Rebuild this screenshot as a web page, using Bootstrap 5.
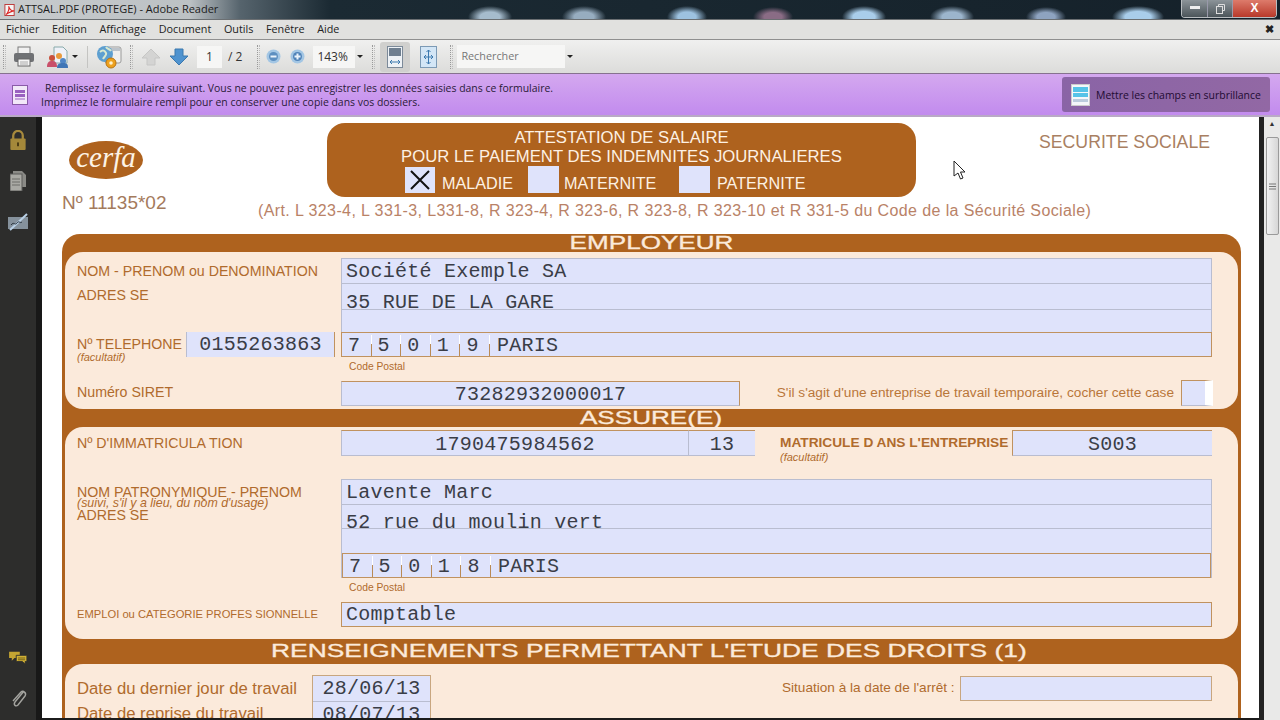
<!DOCTYPE html>
<html lang="fr">
<head>
    <meta charset="UTF-8">
    <title>ATTSAL.PDF (PROTEGE) - Adobe Reader</title>
    <link rel="stylesheet" href="https://cdn.jsdelivr.net/npm/bootstrap@5.3.0/dist/css/bootstrap.min.css">
    <style>
        html, body { height: 720px; overflow: hidden; }
        body { font-family: "Open Sans", "Liberation Sans", sans-serif; background: #1c1c1c; color: #222; position: relative; }
        .app-shell { width: 1280px; height: 720px; }

        /* barre de titre */
        .title-bar {
            height: 20px; font-size: 11px; color: #1c1c1c; padding-left: 4px;
            background:
                radial-gradient(ellipse 22px 11px at 490px 17px, #a6bccd 45%, transparent),
                radial-gradient(ellipse 22px 11px at 584px 17px, #97adc0 45%, transparent),
                radial-gradient(ellipse 20px 11px at 687px 17px, #9dc2e0 45%, transparent),
                radial-gradient(ellipse 20px 10px at 773px 17px, #8a6c85 45%, transparent),
                radial-gradient(ellipse 22px 11px at 864px 17px, #a9cdea 50%, transparent),
                radial-gradient(ellipse 22px 11px at 952px 17px, #9cb5cc 45%, transparent),
                radial-gradient(ellipse 20px 10px at 1046px 17px, #8ea3c0 45%, transparent),
                radial-gradient(ellipse 26px 11px at 1138px 17px, #a9cdea 50%, transparent),
                linear-gradient(90deg, #c8cbcd 0, #bcc1c4 190px, #56646d 240px, #1b2a33 330px, #15212a 100%);
            border-bottom: 1px solid #6b6f72;
        }
        .title-icon { margin-right: 2px; }
        .win-btns { margin-left: auto; margin-right: 3px; height: 18px; border: 1px solid #b9bdc0; border-top: 0; border-radius: 0 0 4px 4px; width: 96px; overflow: hidden; margin-top: -2px; }
        .win-btns span { display: flex; align-items: center; justify-content: center; height: 100%; }
        .win-min { width: 26px; background: linear-gradient(#8c9499, #4c555a); border-right: 1px solid #99a; }
        .win-max { width: 25px; background: linear-gradient(#8c9499, #4c555a); border-right: 1px solid #99a; }
        .win-close { flex: 1; background: linear-gradient(#dd7b6b, #b8392a); color: #fff; font: 700 12px "Liberation Sans", sans-serif; }

        .menu-bar { height: 20px; background: #e1e1df; border-bottom: 1px solid #8f8f8f; font-size: 10.8px; padding: 0 6px; gap: 12.6px; color: #222; }
        .menu-close { font: 700 11px "Liberation Sans", sans-serif; margin-left: auto; }
        .tool-bar { height: 34px; background: linear-gradient(#f0f0ef, #dcdcda); border-bottom: 1px solid #86728f; padding-left: 3px; font-size: 12px; color: #333; }
        .tb-grip { width: 3px; height: 24px; flex: none; border-left: 1px dotted #999; border-right: 1px dotted #bbb; }
        .tb-line { width: 1px; height: 22px; flex: none; background: #c4c4c2; }
        .tb-input { background: #f6f6f5; height: 22px; display: flex; align-items: center; flex: none; }
        .tb-page { width: 25px; justify-content: center; }
        .tb-zoom { width: 42px; padding-left: 4px; }
        .tb-search { width: 108px; height: 23px; padding-left: 4px; font-size: 10.8px; color: #777; }
        .tb-caret { width: 0; height: 0; flex: none; border-left: 3px solid transparent; border-right: 3px solid transparent; border-top: 3px solid #222; }
        .tb-active { width: 30px; height: 30px; flex: none; background: #d0d0ce; border-radius: 3px; display: flex; align-items: center; justify-content: center; }
        .ml2 { margin-left: 2px; } .ml3 { margin-left: 3px; } .ml4 { margin-left: 4px; } .ml5 { margin-left: 5px; }
        .ml6 { margin-left: 6px; } .ml7 { margin-left: 7px; } .ml8 { margin-left: 8px; } .ml9 { margin-left: 9px; }
        .ml10 { margin-left: 10px; } .ml12 { margin-left: 12px; } .ml13 { margin-left: 13px; } .ml15 { margin-left: 15px; }

        .notice-bar { height: 43px; background: linear-gradient(#d4a8ef, #c28bee); border-bottom: 2px solid #b9a9c6; font-size: 10.45px; line-height: 14px; color: #2a1a38; padding-left: 12px; }
        .notice-text { margin-left: 13px; }
        .notice-btn { margin-left: auto; margin-right: 10px; width: 208px; height: 35px; background: linear-gradient(90deg, #8a64a6, #9268a4); border-radius: 3px; color: #1f0b33; padding-left: 9px; gap: 6px; }

        /* zone document */
        .doc-zone { height: 603px; }
        .side-rail { width: 36px; background: #2d2d2c; padding: 13px 0 12px; border-right: 6px solid #181818; box-sizing: content-box; }
        .rail-icon-a { margin-bottom: 20px; }
        .rail-icon-b { margin-bottom: 21px; }
        .rail-gap { flex: 1; }
        .pdf-page { width: 1217px; background: #fff; padding: 6px 18px 0 20px; overflow: hidden; margin-bottom: 2px; font-family: "Liberation Sans", Arial, sans-serif; }
        .right-edge { width: 5px; background: #222; }
        .scroll-rail { width: 16px; background: #e9e9e8; text-align: center; font-size: 7px; line-height: 14px; color: #333; }
        .scroll-thumb { margin: 6px 1px 0 2px; height: 98px; background: linear-gradient(90deg, #f2f2f2, #d6d6d6); border: 1px solid #9a9a9a; border-radius: 2px; }

        /* entete cerfa */
        .head-left { width: 196px; flex: none; }
        .cerfa-logo { width: 74px; height: 38px; margin: 18px 0 0 7px; background: #ae621e; border-radius: 50%; color: #fdf3e6; font: italic 29px/32px "Liberation Serif", serif; text-align: center; }
        .cerfa-num { font-size: 19px; line-height: 22px; color: #a47a5c; margin-top: 13px; }
        .head-box { margin-left: 69px; width: 589px; height: 74px; background: #ae621e; border-radius: 18px; color: #fdf1e4; text-align: center; font-size: 16.7px; line-height: 19px; padding-top: 5px; }
        .head-checks { font-size: 16.2px; padding-left: 78px; line-height: 34px; text-align: left; height: 27px; }
        .head-check { width: 31px; height: 27px; background: #dfe3fb; color: #111; flex: none; }
        .check-first { width: 30px; height: 26px; margin-top: 1px; }
        .label-maladie { margin-left: 7px; width: 86px; }
        .label-maternite { margin-left: 5px; width: 115px; }
        .label-paternite { margin-left: 7px; }
        .secu-title { margin-left: 123px; margin-top: 8px; font-size: 17.7px; line-height: 22px; color: #a97f62; white-space: nowrap; }
        .art-line { margin-top: 4px; font-size: 16px; line-height: 20px; color: #b98267; white-space: nowrap; letter-spacing: .39px; }

        /* formulaire */
        .form-frame { background: #ae621e; border-radius: 18px 18px 0 0; margin-top: 13px; padding: 0 3px; height: 520px; }
        .band-title { text-align: center; color: #fbeadb; font-size: 18px; white-space: nowrap; -webkit-text-stroke: .3px #fbeadb; height: 18px; line-height: 19px; }
        .band-title span { display: inline-block; transform: scaleX(1.45); }
        .band-tall { height: 25px; line-height: 25px; padding-right: 5px; }
        .band-tall span { transform: scaleX(1.465); }
        .form-panel { background: #fbeadb; border-radius: 18px; color: #b06b2d; font-size: 14.2px; padding: 0 0 0 12px; }
        .panel-emp { height: 157px; padding-top: 6px; }
        .panel-ass { height: 212px; padding-top: 3px; }
        .panel-ren { height: 80px; padding-top: 12px; font-size: 16.7px; }
        .row-label { width: 264px; flex: none; white-space: nowrap; }
        .label-line { height: 24px; line-height: 26px; }
        .label-tel { width: 109px; }
        .tel-text { line-height: 24px; height: 19px; }
        .small-note { font-size: 11px; line-height: 12px; font-style: italic; }
        .note-suivi { font-size: 12.4px; line-height: 9px; }
        .code-postal { font-size: 10.3px; line-height: 12px; color: #b06b2d; margin: 4px 0 0 272px; }

        .pdf-field { background: #dfe3fb; font-family: "Liberation Mono", monospace; font-size: 20px; letter-spacing: .25px; color: #3a3d47; white-space: nowrap; display: flex; align-items: center; line-height: 20px; }
        .field-line { border-top: 1px solid #b9bdd0; }
        .field-block { width: 871px; border: 1px solid #b9bdd0; border-bottom: 0; }
        .field-brown { border: 1px solid #c0925f; }
        .field-up { align-items: flex-start; padding-top: 3px; }
        .field-low { align-items: flex-start; padding-top: 9px; }
        .field-mid { align-items: flex-start; padding-top: 8px; }
        .field-drop { padding-top: 2px; }
        .h23 { height: 23px; } .h24 { height: 24px; } .h25 { height: 25px; } .h26 { height: 26px; }
        .comb-cell { width: 29.6px; height: 100%; flex: none; display: flex; align-items: center; padding-left: 6px; border-right: 1px solid; border-image: linear-gradient(#fff 45%, #b98a55 45%) 1; }
        .comb-town { margin-left: 7px; }
        .field-tel { width: 149px; height: 25px; padding-top: 1px; border-right: 1px solid #c0925f; border-left: 1px solid #b9bdd0; }
        .siret-row { margin-top: 7px; }
        .field-siret { width: 399px; height: 25px; border-top: 1px solid #c0925f; border-right: 1px solid #c0925f; border-left: 1px solid #b9bdd0; border-bottom: 1px solid #b9bdd0; padding-top: 4px; }
        .temp-text { margin-left: auto; margin-right: 7px; font-size: 13.67px; color: #b9763a; white-space: nowrap; }
        .field-temp { width: 32px; height: 26px; margin-right: 25px; border: 1px solid #c0925f; border-bottom-color: #b9bdd0; border-right-width: 8px; border-right-color: #fff; }
        .field-num { width: 347px; height: 26px; border-top: 1px solid #c0925f; border-bottom: 1px solid #b9bdd0; border-left: 1px solid #b9bdd0; padding-top: 3px; }
        .field-cle { width: 67px; height: 26px; border-left: 1px solid #b9bdd0; border-top: 1px solid #c0925f; border-bottom: 1px solid #b9bdd0; padding-top: 3px; }
        .mat-label { margin-left: 25px; width: 232px; }
        .mat-text { line-height: 26px; height: 21px; font-weight: 700; font-size: 13.7px; white-space: nowrap; }
        .field-mat { width: 200px; height: 26px; border-top: 1px solid #c0925f; border-bottom: 1px solid #b9bdd0; border-left: 1px solid #c0925f; padding-top: 3px; }
        .ass-block { margin-top: 23px; }
        .ass-label { line-height: 14px; padding-top: 6px; }
        .emploi-row { margin-top: 8px; }
        .emploi-label { font-size: 11.2px; }
        .date-labels { width: 235px; line-height: 25px; white-space: nowrap; }
        .date-stack { width: 119px; border: 1px solid #c8a67f; margin-top: -1px; }
        .situation { margin-left: 351px; width: 178px; line-height: 24px; font-size: 13.6px; white-space: nowrap; }
        .field-situation { width: 252px; height: 25px; border: 1px solid #c8a67f; }
        .mouse-arrow { position: absolute; left: 953px; top: 160px; }
    </style>
</head>
<body>
<div class="app-shell d-flex flex-column">

    <!-- barre de titre -->
    <div class="title-bar d-flex align-items-center flex-shrink-0">
        <svg width="12" height="14" viewBox="0 0 13 14" class="title-icon"><rect x="1" y="1" width="10" height="12" fill="#f5f5f5" stroke="#b33"/><path d="M2 12c3-2 4-7 3-9 1 3 3 5 6 5-3 0-6 2-9 4z" fill="none" stroke="#d22" stroke-width="1.2"/></svg>
        <span>ATTSAL.PDF (PROTEGE) - Adobe Reader</span>
        <div class="win-btns d-flex">
            <span class="win-min"><svg width="10" height="4"><rect width="10" height="3" fill="#eee"/></svg></span>
            <span class="win-max"><svg width="11" height="11" fill="none" stroke="#ddd"><rect x="1.5" y="3.5" width="6" height="7"/><path d="M3.5 3V1.5h6v6H8"/></svg></span>
            <span class="win-close">X</span>
        </div>
    </div>

    <!-- menu -->
    <div class="menu-bar d-flex align-items-center flex-shrink-0">
        <span>Fichier</span><span>Edition</span><span>Affichage</span><span>Document</span><span>Outils</span><span>Fenêtre</span><span>Aide</span>
        <span class="menu-close">✖</span>
    </div>

    <!-- outils -->
    <div class="tool-bar d-flex align-items-center flex-shrink-0">
        <span class="tb-grip"></span>
        <svg width="22" height="21" viewBox="0 0 22 21" class="ml7 flex-shrink-0"><rect x="5" y="1" width="12" height="7" fill="#f0f0f0" stroke="#7b7b7b"/><rect x="1" y="7" width="20" height="9" rx="2" fill="#6f7174"/><rect x="5" y="13" width="12" height="7" fill="#f5f5f5" stroke="#666"/><path d="M7 16h8M7 18h8" stroke="#aaa"/></svg>
        <svg width="22" height="22" viewBox="0 0 22 22" class="ml12 flex-shrink-0"><path d="M7 1h9l4 4v12H7z" fill="#eef1f8" stroke="#8aa"/><circle cx="5" cy="12" r="3" fill="#c9503c"/><path d="M0 21c0-5 2-6 5-6s5 1 5 6z" fill="#c9506a"/><circle cx="12" cy="10" r="3" fill="#e89a3c"/><circle cx="16" cy="15" r="3" fill="#4f86c6"/><path d="M10 22c0-4 2-5 6-5s5 1 5 5z" fill="#3f76b6"/></svg>
        <span class="tb-caret ml3"></span>
        <span class="tb-line ml9"></span>
        <svg width="26" height="24" viewBox="0 0 26 24" class="ml8 flex-shrink-0"><rect x="9" y="2" width="16" height="16" rx="2" fill="#f0f0ee" stroke="#9a9a9a"/><rect x="10" y="3" width="14" height="3" fill="#bcc3ca"/><circle cx="9" cy="9" r="8" fill="#5d9fd0"/><path d="M4 7c3-3 5-1 6 1s-2 4-3 6M10 2c1 2 4 2 5 4" stroke="#d8e8d0" stroke-width="2" fill="none"/><circle cx="15" cy="18" r="5" fill="#eda11e" stroke="#b87412"/><circle cx="15" cy="18" r="1.8" fill="#fff3d0"/></svg>
        <span class="tb-grip ml8"></span>
        <svg width="20" height="18" viewBox="0 0 20 18" class="ml8 flex-shrink-0"><path d="M10 1l9 9h-5v7H6v-7H1z" fill="#d4d4d3" stroke="#c6c6c5"/></svg>
        <svg width="20" height="18" viewBox="0 0 20 18" class="ml8 flex-shrink-0"><path d="M10 17L1 8h5V1h8v7h5z" fill="#4f93cf" stroke="#3b78ae"/></svg>
        <div class="tb-input tb-page ml8">1</div>
        <span class="ml6">/ 2</span>
        <span class="tb-grip ml15"></span>
        <svg width="15" height="15" class="ml6 flex-shrink-0"><circle cx="7.5" cy="7.5" r="7" fill="#a3c6e4"/><circle cx="7.5" cy="7.5" r="4.5" fill="#5d8fc0"/><rect x="4.5" y="6.5" width="6" height="2" fill="#eaf3fb"/></svg>
        <svg width="15" height="15" class="ml9 flex-shrink-0"><circle cx="7.5" cy="7.5" r="7" fill="#a3c6e4"/><circle cx="7.5" cy="7.5" r="4.5" fill="#4f82b8"/><path d="M4.5 6.5h2v-2h2v2h2v2h-2v2h-2v-2h-2z" fill="#eaf3fb"/></svg>
        <div class="tb-input tb-zoom ml8">143%</div>
        <span class="tb-caret ml2"></span>
        <span class="tb-grip ml9"></span>
        <div class="tb-active ml5"><svg width="16" height="22" viewBox="0 0 16 22"><rect x=".5" y=".5" width="15" height="21" fill="#eef2f6" stroke="#7c8a99"/><rect x="2" y="2" width="12" height="8" fill="#6f7f90"/><path d="M3 16h10M3 16l2-2M3 16l2 2M13 16l-2-2M13 16l-2 2" stroke="#3b78ae" fill="none"/></svg></div>
        <svg width="17" height="22" viewBox="0 0 17 22" class="ml10 flex-shrink-0"><rect x=".5" y=".5" width="16" height="21" fill="#d3e6f6" stroke="#7c9ab5"/><path d="M8.5 4v14M4 11h9M8.5 4L6.5 6M8.5 4l2 2M8.5 18l-2-2M8.5 18l2-2M4 11l2-2M4 11l2 2M13 11l-2-2M13 11l-2 2" stroke="#3b78ae" fill="none"/></svg>
        <span class="tb-grip ml13"></span>
        <div class="tb-input tb-search ml4">Rechercher</div>
        <span class="tb-caret ml2"></span>
    </div>

    <!-- bandeau formulaire -->
    <div class="notice-bar d-flex align-items-center flex-shrink-0">
        <svg width="16" height="20" viewBox="0 0 16 20" class="flex-shrink-0"><rect x=".5" y=".5" width="15" height="19" fill="#f2e8f8" stroke="#8a5aa8"/><rect x="3" y="5" width="10" height="3" fill="#9a62c0"/><rect x="3" y="9" width="10" height="3" fill="#9a62c0"/><rect x="3" y="13" width="10" height="2" fill="#c6a5dc"/></svg>
        <div class="notice-text">
            <div class="ps-1">Remplissez le formulaire suivant. Vous ne pouvez pas enregistrer les données saisies dans ce formulaire.</div>
            <div>Imprimez le formulaire rempli pour en conserver une copie dans vos dossiers.</div>
        </div>
        <div class="notice-btn d-flex align-items-center">
            <svg width="19" height="22" viewBox="0 0 19 22" class="flex-shrink-0"><rect x=".5" y=".5" width="18" height="21" fill="#f4f7fa" stroke="#ccc"/><rect x="2" y="3" width="15" height="5" fill="#55c3e8"/><rect x="2" y="9" width="15" height="4" fill="#55c3e8"/><rect x="2" y="15" width="15" height="3" fill="#bcd"/></svg>
            <span>Mettre les champs en surbrillance</span>
        </div>
    </div>

    <!-- document -->
    <div class="doc-zone d-flex flex-grow-1">
        <div class="side-rail d-flex flex-column align-items-center">
            <svg width="18" height="21" viewBox="0 0 18 22" class="rail-icon-a"><path d="M4 10V6a5 5 0 0 1 10 0v4" fill="none" stroke="#a78a3d" stroke-width="2.4"/><rect x="1" y="9" width="16" height="12" rx="1" fill="#a4883a"/><rect x="8" y="13" width="2" height="4" fill="#4a3a14"/></svg>
            <svg width="16" height="20" viewBox="0 0 16 20" class="rail-icon-b"><path d="M3 0h9l4 4v12H3z" fill="#8a8a86"/><rect x="0" y="3" width="12" height="17" fill="#a9a9a4" stroke="#5a5a58"/><path d="M2 8h8M2 11h8M2 14h8" stroke="#6c6c68"/></svg>
            <svg width="22" height="20" viewBox="0 0 22 20"><rect x="1" y="5" width="20" height="12" fill="#85919c"/><path d="M3 18L20 2" stroke="#b9d0e6" stroke-width="2"/><path d="M4 13c3-4 4 1 6-2s3 1 5-1" fill="none" stroke="#2a3540"/></svg>
            <div class="rail-gap"></div>
            <svg width="22" height="16" viewBox="0 0 22 18" class="rail-icon-a"><path d="M1 2h12v7H7l-3 3V9H1z" fill="#c4a532"/><path d="M9 6h12v7h-2v3l-3-3H9z" fill="#d0b035" stroke="#2d2d2c"/><path d="M11 9h8M11 11h8" stroke="#6a5a18"/></svg>
            <svg width="20" height="22" viewBox="0 0 18 22" fill="none" stroke="#a4a4a0" stroke-width="1.4"><path d="M15 5L6 16c-2 3 1 5 3 3L16 10c2-3-2-6-4-4L4 15"/></svg>
        </div>
        <div class="pdf-page">
            <div class="d-flex">
                <div class="head-left">
                    <div class="cerfa-logo">cerfa</div>
                    <div class="cerfa-num">Nº 11135*02</div>
                </div>
                <div class="flex-grow-1">
                    <div class="d-flex">
                        <div class="head-box">
                            <div>ATTESTATION DE SALAIRE</div>
                            <div>POUR LE PAIEMENT DES INDEMNITES JOURNALIERES</div>
                            <div class="head-checks d-flex">
                                <span class="head-check check-first d-flex align-items-center justify-content-center"><svg width="20" height="20" viewBox="0 0 20 20" stroke="#111" stroke-width="2"><path d="M1 1l18 18M19 1L1 19"/></svg></span>
                                <span class="label-maladie">MALADIE</span>
                                <span class="head-check"></span>
                                <span class="label-maternite">MATERNITE</span>
                                <span class="head-check"></span>
                                <span class="label-paternite">PATERNITE</span>
                            </div>
                        </div>
                        <div class="secu-title">SECURITE SOCIALE</div>
                    </div>
                    <div class="art-line">(Art. L 323-4, L 331-3, L331-8, R 323-4, R 323-6, R 323-8, R 323-10 et R 331-5 du Code de la Sécurité Sociale)</div>
                </div>
            </div>

            <div class="form-frame">
                <div class="band-title"><span>EMPLOYEUR</span></div>
                <div class="form-panel panel-emp">
                    <div class="d-flex">
                        <div class="row-label">
                            <div class="label-line">NOM - PRENOM ou DENOMINATION</div>
                            <div class="label-line">ADRES SE</div>
                        </div>
                        <div class="field-block">
                            <div class="pdf-field field-up ps-1 h24">Société Exemple SA</div>
                            <div class="pdf-field field-line field-low ps-1 h26">35 RUE DE LA GARE</div>
                            <div class="pdf-field field-line h23"></div>
                        </div>
                    </div>
                    <div class="d-flex h25">
                        <div class="row-label d-flex">
                            <div class="label-tel">
                                <div class="tel-text">Nº TELEPHONE</div>
                                <div class="small-note">(facultatif)</div>
                            </div>
                            <div class="pdf-field field-tel justify-content-center">0155263863</div>
                        </div>
                        <div class="field-block field-brown field-drop pdf-field h25">
                            <span class="comb-cell">7</span><span class="comb-cell">5</span><span class="comb-cell">0</span><span class="comb-cell">1</span><span class="comb-cell">9</span>
                            <span class="comb-town">PARIS</span>
                        </div>
                    </div>
                    <div class="code-postal">Code Postal</div>
                    <div class="d-flex align-items-center siret-row">
                        <div class="row-label">Numéro SIRET</div>
                        <div class="pdf-field field-siret justify-content-center">73282932000017</div>
                        <div class="temp-text">S'il s'agit d'une entreprise de travail temporaire, cocher cette case</div>
                        <div class="pdf-field field-temp"></div>
                    </div>
                </div>

                <div class="band-title"><span>ASSURE(E)</span></div>
                <div class="form-panel panel-ass">
                    <div class="d-flex h26">
                        <div class="row-label label-line">Nº D'IMMATRICULA TION</div>
                        <div class="pdf-field field-num justify-content-center">1790475984562</div>
                        <div class="pdf-field field-cle justify-content-center">13</div>
                        <div class="mat-label">
                            <div class="mat-text">MATRICULE D ANS L'ENTREPRISE</div>
                            <div class="small-note">(facultatif)</div>
                        </div>
                        <div class="pdf-field field-mat justify-content-center">S003</div>
                    </div>
                    <div class="d-flex ass-block">
                        <div class="row-label ass-label">
                            <div>NOM PATRONYMIQUE - PRENOM</div>
                            <div class="small-note note-suivi">(suivi, s'il y a lieu, du nom d'usage)</div>
                            <div>ADRES SE</div>
                        </div>
                        <div class="field-block">
                            <div class="pdf-field field-drop ps-1 h24">Lavente Marc</div>
                            <div class="pdf-field field-line field-mid ps-1 h24">52 rue du moulin vert</div>
                            <div class="pdf-field field-line h25"></div>
                            <div class="pdf-field field-brown field-drop h25">
                                <span class="comb-cell">7</span><span class="comb-cell">5</span><span class="comb-cell">0</span><span class="comb-cell">1</span><span class="comb-cell">8</span>
                                <span class="comb-town">PARIS</span>
                            </div>
                        </div>
                    </div>
                    <div class="code-postal">Code Postal</div>
                    <div class="d-flex align-items-center emploi-row">
                        <div class="row-label emploi-label">EMPLOI ou CATEGORIE PROFES SIONNELLE</div>
                        <div class="field-block field-brown pdf-field ps-1 h25">Comptable</div>
                    </div>
                </div>

                <div class="band-title band-tall"><span>RENSEIGNEMENTS PERMETTANT L'ETUDE DES DROITS (1)</span></div>
                <div class="form-panel panel-ren">
                    <div class="d-flex">
                        <div class="date-labels">
                            <div>Date du dernier jour de travail</div>
                            <div>Date de reprise du travail</div>
                        </div>
                        <div class="date-stack">
                            <div class="pdf-field justify-content-center field-up h25">28/06/13</div>
                            <div class="pdf-field justify-content-center field-line field-up h25">08/07/13</div>
                        </div>
                        <div class="situation">Situation à la date de l'arrêt :</div>
                        <div class="pdf-field field-situation"></div>
                    </div>
                </div>
            </div>
        </div>
        <div class="right-edge"></div>
        <div class="scroll-rail">
            ▲
            <div class="scroll-thumb d-flex align-items-center justify-content-center"><svg width="7" height="7" stroke="#777"><path d="M0 1h7M0 3.500h7M0 6h7"/></svg></div>
        </div>
    </div>
</div>

<svg class="mouse-arrow" width="13" height="20" viewBox="0 0 13 20"><path d="M1 1v15l4-3 2.500 6 2.500-1-2.500-6H12z" fill="#fff" stroke="#222"/></svg>
</body>
</html>
